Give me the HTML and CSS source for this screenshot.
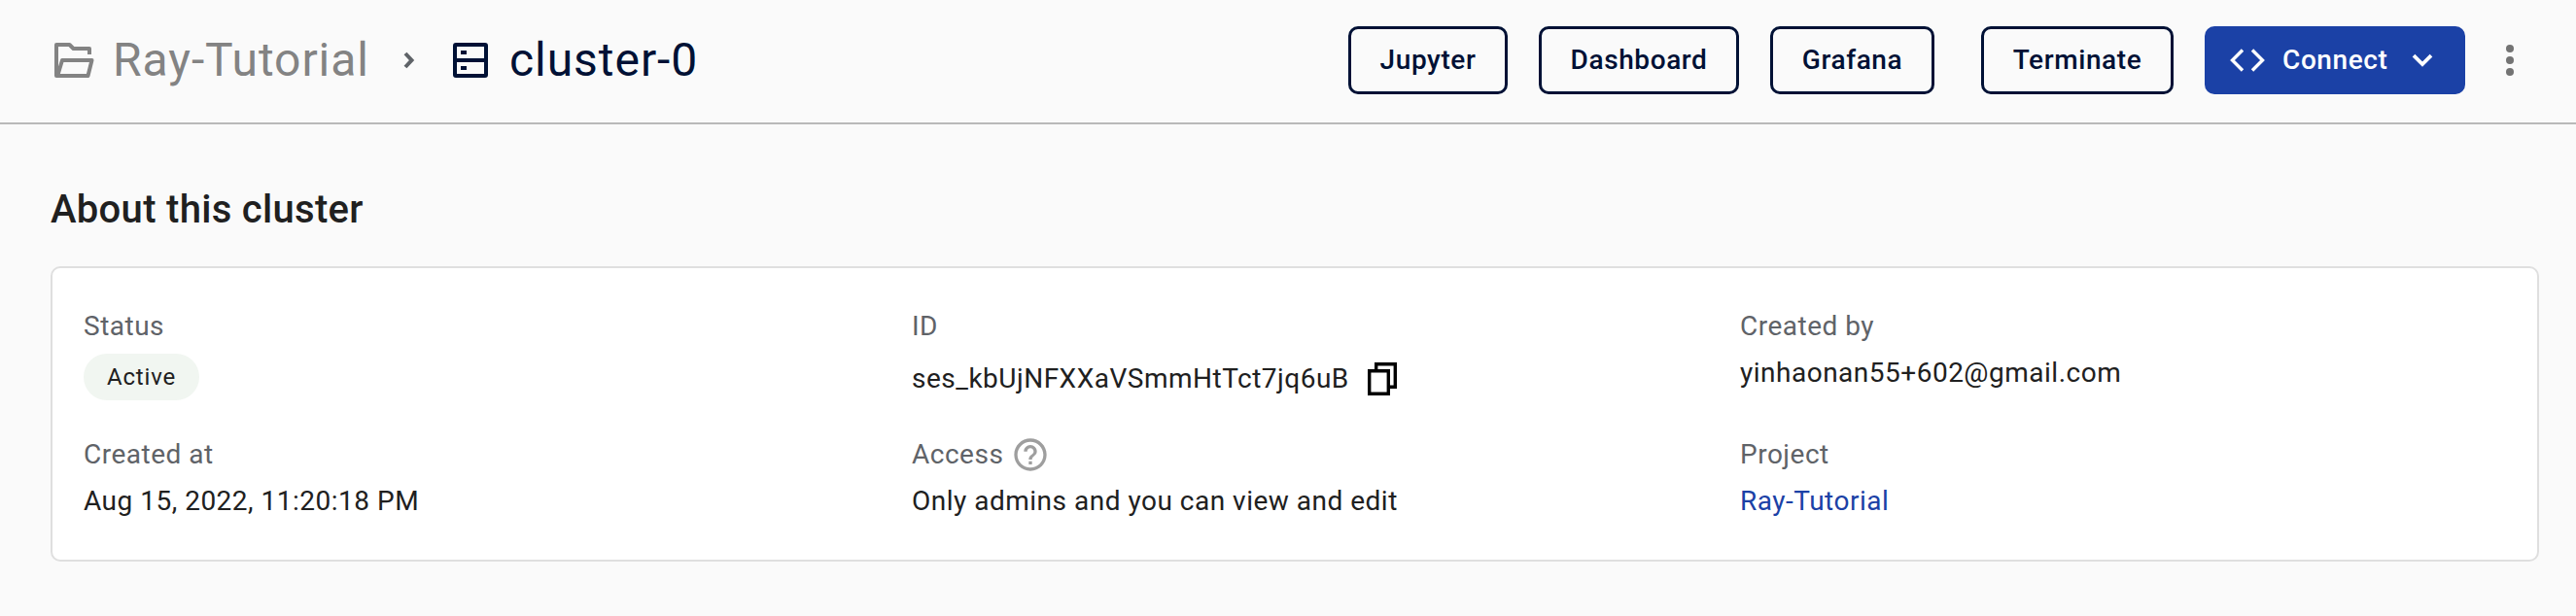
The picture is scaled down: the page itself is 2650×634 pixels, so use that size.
FILE: index.html
```html
<!DOCTYPE html>
<html lang="en">
<head>
<meta charset="utf-8">
<title>cluster-0</title>
<link rel="stylesheet" href="styles.css">
</head>
<body>
<header class="header">
  <nav class="breadcrumb">
    <a class="crumb crumb-parent">
      <svg class="icon-folder" viewBox="0 0 41 36" fill="none" stroke="currentColor" stroke-width="4" stroke-linejoin="round"><path d="M36 12V6H19.500L15.500 2H2V34H34.500L38.500 18H8L3.500 33"/></svg>
      <span class="crumb-text">Ray-Tutorial</span>
    </a>
    <svg class="icon-sep" viewBox="0 0 12 18" fill="none" stroke="currentColor" stroke-width="4"><path d="M2 2L8.500 9L2 16"/></svg>
    <span class="crumb crumb-current">
      <svg class="icon-cluster" viewBox="0 0 36 36"><rect x="2" y="2" width="32" height="32" rx="1" fill="none" stroke="currentColor" stroke-width="4"/><path d="M2 16h32v4H2zM8 8h6v4H8zM8 24h6v4H8z" fill="currentColor"/></svg>
      <span class="crumb-text">cluster-0</span>
    </span>
  </nav>
  <div class="actions">
    <button class="btn jupyter">Jupyter</button>
    <button class="btn dashboard">Dashboard</button>
    <button class="btn grafana">Grafana</button>
    <button class="btn terminate">Terminate</button>
    <button class="btn connect">
      <svg class="icon-code" viewBox="0 0 36 24" fill="none" stroke="currentColor" stroke-width="3.400"><path d="M13 1.500L2.500 12L13 22.500M23 1.500L33.500 12L23 22.500"/></svg>
      <span class="connect-text">Connect</span>
      <svg class="icon-down" viewBox="0 0 22 14" fill="none" stroke="currentColor" stroke-width="3.800"><path d="M2 2.200L11 11L20 2.200"/></svg>
    </button>
    <svg class="icon-more" viewBox="0 0 8 32" fill="currentColor"><circle cx="4" cy="4" r="4"/><circle cx="4" cy="16" r="4"/><circle cx="4" cy="28" r="4"/></svg>
  </div>
</header>
<main class="main">
  <h1 class="title">About this cluster</h1>
  <section class="card">
    <div class="field"><div class="label">Status</div><div class="pill">Active</div></div>
    <div class="field"><div class="label">ID</div><div class="value id-value"><span class="id-text">ses_kbUjNFXXaVSmmHtTct7jq6uB</span>
      <svg class="icon-copy" viewBox="0 0 30 34" fill="none" stroke="currentColor" stroke-width="3.400"><path d="M8.700 8V1.700H28.300V25.300H22"/><path d="M1.700 8.700H21.300V32.300H1.700z"/></svg></div></div>
    <div class="field"><div class="label">Created by</div><div class="value">yinhaonan55+602@gmail.com</div></div>
    <div class="field"><div class="label">Created at</div><div class="value">Aug 15, 2022, 11:20:18 PM</div></div>
    <div class="field"><div class="label"><span>Access</span>
      <svg class="icon-help" viewBox="0 0 24 24" fill="currentColor"><path d="M11 18h2v-2h-2v2zm1-16C6.480 2 2 6.480 2 12s4.480 10 10 10 10-4.480 10-10S17.520 2 12 2zm0 18c-4.410 0-8-3.590-8-8s3.590-8 8-8 8 3.590 8 8-3.590 8-8 8zm0-14c-2.210 0-4 1.790-4 4h2c0-1.100.9-2 2-2s2 .9 2 2c0 2-3 1.750-3 5h2c0-2.250 3-2.500 3-5 0-2.210-1.790-4-4-4z"/></svg></div><div class="value">Only admins and you can view and edit</div></div>
    <div class="field"><div class="label">Project</div><div class="value"><a class="link">Ray-Tutorial</a></div></div>
  </section>
</main>
</body>
</html>
```
FILE: styles.css
```css
* { box-sizing: border-box; }
body {
  margin: 0;
  background: #fafafa;
  color: #202020;
  font-family: Roboto, "Liberation Sans", sans-serif;
  font-size: 28px;
  letter-spacing: 0.5px;
}
svg { display: block; flex: none; }
.header {
  display: flex;
  justify-content: space-between;
  height: 128px;
  padding: 0 64px 0 56px;
  border-bottom: 2px solid #b9b9b9;
}
.breadcrumb, .crumb, .actions { display: flex; align-items: center; }
.breadcrumb { height: 124px; }
.crumb { font-size: 48px; line-height: 64px; letter-spacing: 0.95px; white-space: nowrap; }
.crumb-parent { width: 359px; color: #838383; }
.crumb-current { color: #001135; }
.icon-folder { width: 41px; height: 36px; margin-right: 19px; }
.icon-sep { width: 12px; height: 18px; margin-right: 39px; color: #5f6368; }
.icon-cluster { width: 36px; height: 36px; margin-right: 22px; }
.actions { height: 124px; }
.btn {
  display: flex;
  align-items: center;
  justify-content: center;
  height: 70px;
  margin: 0 32px 0 0;
  padding: 0;
  border: 3px solid #001135;
  border-radius: 10px;
  background: transparent;
  color: #001135;
  font: 500 28px/40px Roboto, sans-serif;
  letter-spacing: 0.6px;
}
.jupyter { width: 164px; }
.dashboard { width: 206px; }
.grafana { width: 169px; margin-right: 48px; }
.terminate { width: 198px; }
.connect {
  width: 268px;
  margin-right: 42px;
  padding-left: 26px;
  justify-content: flex-start;
  border: 0;
  background: #1b41a6;
  color: #fff;
}
.icon-code { width: 36px; height: 24px; margin-right: 18px; }
.connect-text { width: 133px; text-align: left; }
.icon-down { width: 22px; height: 14px; }
.icon-more { width: 8px; height: 32px; color: #737373; }
.main { padding: 64px 38px 0 52px; }
.title { margin: 0; font-size: 40px; line-height: 48px; font-weight: 500; letter-spacing: 0.3px; }
.card {
  display: grid;
  grid-template-columns: repeat(3, 1fr);
  grid-template-rows: 96px 88px;
  row-gap: 36px;
  height: 304px;
  margin-top: 34px;
  padding: 40px 0;
  border: 2px solid #dfdfdf;
  border-radius: 10px;
  background: #fff;
}
.field { padding: 0 32px; line-height: 40px; white-space: nowrap; }
.label { display: flex; align-items: center; height: 40px; margin-bottom: 8px; color: #5f6368; }
.icon-help { width: 40px; height: 40px; margin-left: 8px; color: #9e9e9e; }
.pill {
  width: 119px;
  height: 48px;
  border-radius: 24px;
  background: #f1f6f1;
  font-size: 24px;
  line-height: 48px;
  letter-spacing: 0.8px;
  text-align: center;
}
.id-value { display: flex; align-items: center; height: 52px; }
.icon-copy { width: 30px; height: 34px; margin-left: 19px; color: #000; }
.link { color: #1b41a6; }
```
